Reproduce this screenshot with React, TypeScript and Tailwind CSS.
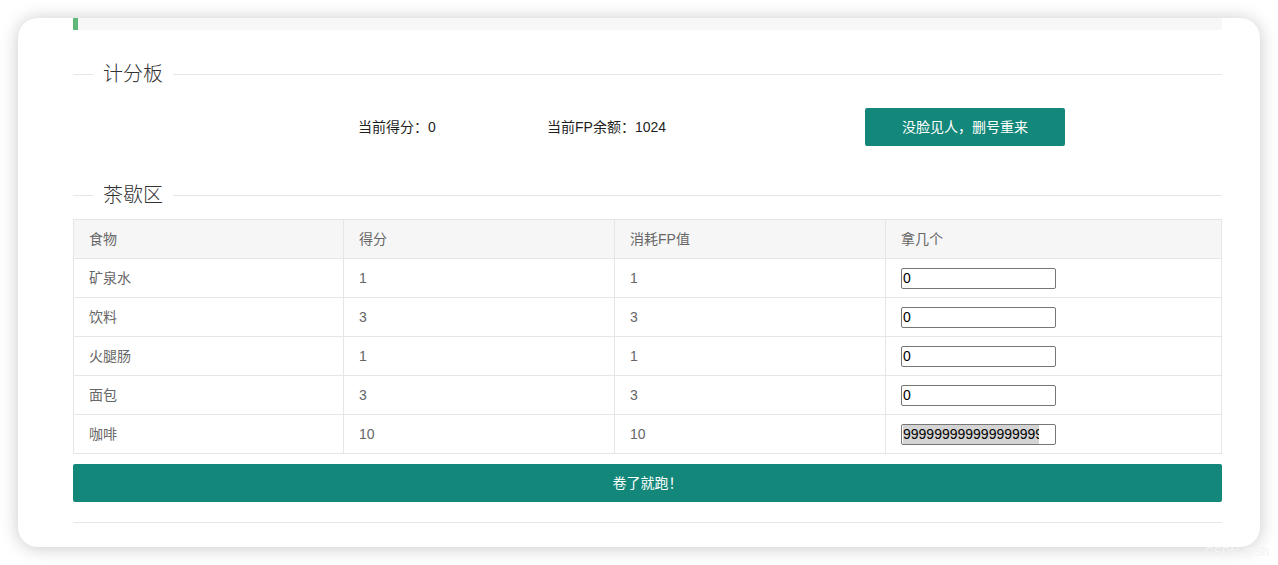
import React from "react";

const font = { fontFamily: '"Liberation Sans", "Noto Sans CJK SC", sans-serif' };

function Legend({ title }: { title: string }) {
  return (
    <div className="flex items-center h-[24px]">
      <div className="w-[20px] h-px bg-[#e6e6e6]" />
      <div className="px-[10px] text-[20px] leading-[24px] font-light text-[#333]">{title}</div>
      <div className="flex-1 h-px bg-[#e6e6e6]" />
    </div>
  );
}

const rows = [
  { name: "矿泉水", score: "1", fp: "1", qty: "0" },
  { name: "饮料", score: "3", fp: "3", qty: "0" },
  { name: "火腿肠", score: "1", fp: "1", qty: "0" },
  { name: "面包", score: "3", fp: "3", qty: "0" },
];

function FakeInput({ children }: { children: React.ReactNode }) {
  return (
    <div className="w-[155px] h-[21px] border border-[#767676] rounded-[2px] bg-white overflow-hidden flex items-center pl-[1px] text-[14px] text-black leading-[19px]">
      {children}
    </div>
  );
}

export default function App() {
  return (
    <div className="w-[1278px] h-[565px] bg-white overflow-hidden relative" style={font}>
      <div className="absolute left-[18px] top-[18px] w-[1242px] h-[529px] rounded-[20px] bg-white shadow-[0_1px_18px_rgba(0,0,0,0.22)]" />
      <div className="relative ml-[18px] mt-[18px] w-[1242px] h-[529px] rounded-[20px] overflow-hidden pl-[55px] pr-[38px] flex flex-col">
        <div className="h-[12px] bg-[#f7f7f7] border-l-[5px] border-[#5fb878]" />
        <div className="mt-[32px]">
          <Legend title="计分板" />
        </div>
        <div className="mt-[22px] h-[38px] flex items-center">
          <div className="w-[285px]" />
          <div className="w-[189px] text-[14px] text-[#1f1f1f]">当前得分：0</div>
          <div className="w-[318px] text-[14px] text-[#1f1f1f]">当前FP余额：1024</div>
          <button className="w-[200px] h-[38px] rounded-[2px] bg-[#13877a] text-white text-[14px]">
            没脸见人，删号重来
          </button>
        </div>
        <div className="mt-[37px]">
          <Legend title="茶歇区" />
        </div>
        <table className="mt-[12px] w-full table-fixed border-collapse text-[14px] text-[#666]">
          <colgroup>
            <col className="w-[270px]" />
            <col className="w-[271px]" />
            <col className="w-[271px]" />
            <col />
          </colgroup>
          <thead>
            <tr className="h-[39px] bg-[#f6f6f6]">
              <th className="border border-[#e6e6e6] px-[15px] text-left font-normal">食物</th>
              <th className="border border-[#e6e6e6] px-[15px] text-left font-normal">得分</th>
              <th className="border border-[#e6e6e6] px-[15px] text-left font-normal">消耗FP值</th>
              <th className="border border-[#e6e6e6] px-[15px] text-left font-normal">拿几个</th>
            </tr>
          </thead>
          <tbody>
            {rows.map((r) => (
              <tr key={r.name} className="h-[39px]">
                <td className="border border-[#e6e6e6] px-[15px]">{r.name}</td>
                <td className="border border-[#e6e6e6] px-[15px]">{r.score}</td>
                <td className="border border-[#e6e6e6] px-[15px]">{r.fp}</td>
                <td className="border border-[#e6e6e6] px-[15px]">
                  <FakeInput>{r.qty}</FakeInput>
                </td>
              </tr>
            ))}
            <tr className="h-[39px]">
              <td className="border border-[#e6e6e6] px-[15px]">咖啡</td>
              <td className="border border-[#e6e6e6] px-[15px]">10</td>
              <td className="border border-[#e6e6e6] px-[15px]">10</td>
              <td className="border border-[#e6e6e6] px-[15px]">
                <FakeInput>
                  <span className="block w-[136px] overflow-hidden whitespace-nowrap bg-[#d4d4d4]">
                    99999999999999999999
                  </span>
                </FakeInput>
              </td>
            </tr>
          </tbody>
        </table>
        <button className="mt-[10px] h-[38px] w-full rounded-[2px] bg-[#13877a] text-white text-[14px]">
          卷了就跑！
        </button>
        <div className="mt-[20px] h-px bg-[#e6e6e6]" />
      </div>
      <div className="absolute left-[1205px] top-[543px] text-[12px] text-[#f4f4f4]">CSDN @Sh</div>
    </div>
  );
}
